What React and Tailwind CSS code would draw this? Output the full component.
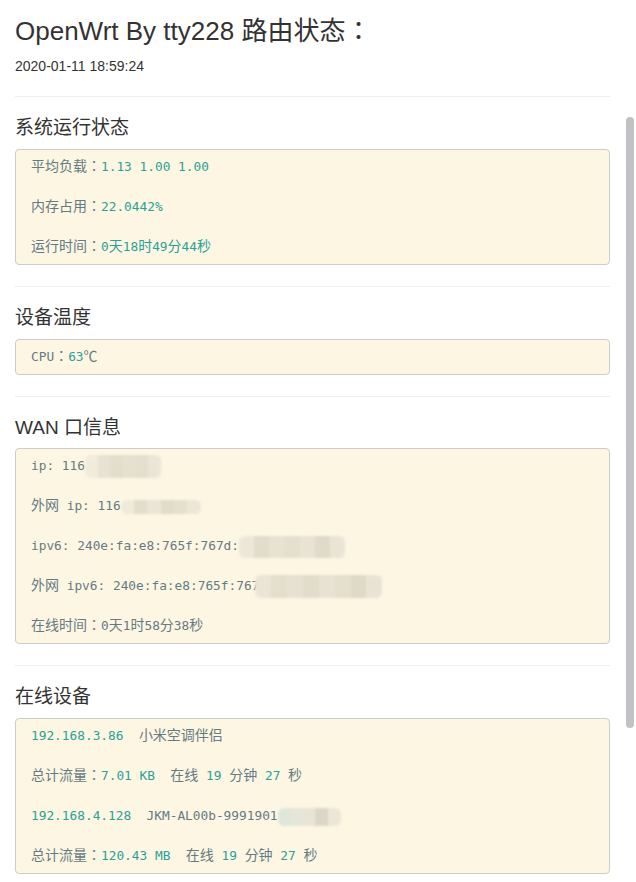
import React from "react";

const CJK = /([\u2100-\u214f\u3000-\u9fff\uff00-\uffef]+)/;

function cjkPart(p, key) {
  const bits = p.split(/(：)/).filter((b) => b.length > 0);
  return (
    <span key={key} className="text-[14px] leading-[0px]">
      {bits.map((b, j) =>
        b === "：" ? (
          <span key={j} className="font-['Noto_Sans_CJK_JP',sans-serif]">
            ：
          </span>
        ) : (
          <React.Fragment key={j}>{b}</React.Fragment>
        )
      )}
    </span>
  );
}

function T({ s, c = "text-[#657b83]" }) {
  const parts = s.split(CJK).filter((p) => p.length > 0);
  return (
    <span className={c}>
      {parts.map((p, i) =>
        CJK.test(p) ? (
          cjkPart(p, i)
        ) : (
          <span key={i} className="text-[12.8px]">
            {p}
          </span>
        )
      )}
    </span>
  );
}

const V = ({ s }) => <T s={s} c="text-[#2aa198]" />;

function Mosaic({ w, h, ml = "", tiles }) {
  return (
    <span
      className={`relative inline-flex align-middle overflow-hidden rounded-[6px] blur-[1px] ${ml}`}
      style={{ width: w, height: h, marginTop: -(h - 20) / 2, marginBottom: -(h - 20) / 2 }}
    >
      {tiles.map((c, i) => (
        <span key={i} className="h-full flex-1" style={{ background: c }} />
      ))}
    </span>
  );
}

function Row({ children }) {
  return <div className="h-[20px] text-[12.8px] leading-[20px] whitespace-pre">{children}</div>;
}

function Box({ children, tight }) {
  return (
    <div
      className={`${tight ? "mt-[7px]" : "mt-[8px]"} rounded-[4px] border border-[#cccccc] bg-[#fdf6e3] pl-[15px] pr-[10px] py-[7px] flex flex-col gap-[20px] font-['DejaVu_Sans_Mono','Noto_Sans_CJK_SC',monospace]`}
    >
      {children}
    </div>
  );
}

function Section({ title, children, first, tight }) {
  return (
    <div>
      <div className={`${first ? "mt-[20px]" : "mt-[21px]"} h-px bg-[#eeeeee]`} />
      <h4 className="mt-[18px] h-[26px] leading-[26px] text-[19px] text-[#333333]">{title}</h4>
      <Box tight={tight}>{children}</Box>
    </div>
  );
}

export default function App() {
  return (
    <div className="relative min-h-[882px] w-[636px] bg-white font-['Liberation_Sans','Noto_Sans_CJK_SC',sans-serif]">
      <div className="pl-[15px] pr-[26px] pt-[16px] pb-[8px]">
        <h3 className="h-[30px] leading-[30px] text-[26px] text-[#333333]">
          OpenWrt By tty228 路由状态
          <span className="font-['Noto_Sans_CJK_JP',sans-serif] leading-[0px]">：</span>
        </h3>
        <div className="mt-[10px] h-[20px] leading-[20px] text-[14px] text-[#333333]">
          2020-01-11 18:59:24
        </div>

        <Section title="系统运行状态" first>
          <Row>
            <T s="平均负载：" />
            <V s="1.13 1.00 1.00" />
          </Row>
          <Row>
            <T s="内存占用：" />
            <V s="22.0442%" />
          </Row>
          <Row>
            <T s="运行时间：" />
            <V s="0天18时49分44秒" />
          </Row>
        </Section>

        <Section title="设备温度">
          <Row>
            <T s="CPU：" />
            <V s="63" />
            <T s="℃" />
          </Row>
        </Section>

        <Section title="WAN 口信息" tight>
          <Row>
            <T s="ip: 116" />
            <Mosaic w={76} h={23} tiles={["#f1ebdc", "#e8e2d2", "#e3ddcc", "#e6e0cf", "#e4dece", "#ebe5d6"]} />
          </Row>
          <Row>
            <T s="外网 ip: 116" />
            <Mosaic w={80} h={14} tiles={["#f0eadb", "#e3ddcc", "#ebe5d6", "#e1dbca", "#e5dfce", "#ece6d7"]} />
          </Row>
          <Row>
            <T s="ipv6: 240e:fa:e8:765f:767d:" />
            <Mosaic w={106} h={22} tiles={["#ede7d8", "#e2dccb", "#e8e2d2", "#e5dfce", "#e9e3d3", "#e0dac9", "#eae4d5"]} />
          </Row>
          <Row>
            <T s="外网 ipv6: 240e:fa:e8:765f:767" />
            <Mosaic w={127} h={23} ml="-ml-[4px]" tiles={["#ebe5d5", "#e4decd", "#e7e1d1", "#e2dccb", "#e8e2d2", "#e5dfce", "#dfd9c8", "#e9e3d3"]} />
          </Row>
          <Row>
            <T s="在线时间：0天1时58分38秒" />
          </Row>
        </Section>

        <Section title="在线设备">
          <Row>
            <V s="192.168.3.86" />
            <T s="  小米空调伴侣" />
          </Row>
          <Row>
            <T s="总计流量：" />
            <V s="7.01 KB" />
            <T s="  在线 " />
            <V s="19" />
            <T s=" 分钟 " />
            <V s="27" />
            <T s=" 秒" />
          </Row>
          <Row>
            <V s="192.168.4.128" />
            <T s="  JKM-AL00b-9991901" />
            <Mosaic w={63} h={18} tiles={["#dfe6da", "#e6e6d8", "#e9e5d6", "#dcd6c6", "#ebe6d7"]} />
          </Row>
          <Row>
            <T s="总计流量：" />
            <V s="120.43 MB" />
            <T s="  在线 " />
            <V s="19" />
            <T s=" 分钟 " />
            <V s="27" />
            <T s=" 秒" />
          </Row>
        </Section>
      </div>
      <div className="absolute left-[626px] top-[117px] h-[611px] w-[8px] rounded-full bg-[#c1c1c6]" />
    </div>
  );
}
